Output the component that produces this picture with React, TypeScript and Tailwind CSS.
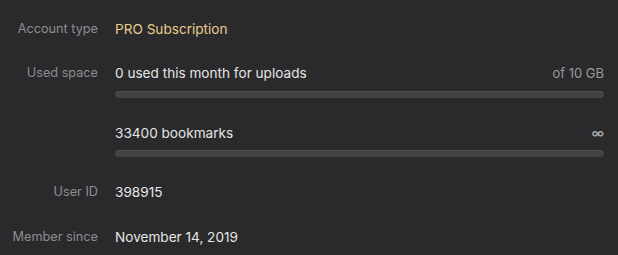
import React from 'react';

const Bar: React.FC = () => (
  <div className="h-[7px] w-full rounded-full bg-[#434345] border-t border-[#4f4f51]" />
);

const Row: React.FC<{ label: string; className?: string; children: React.ReactNode }> = ({ label, className, children }) => (
  <div className={`flex ${className || ''}`}>
    <div className="w-[98px] shrink-0 text-right text-[12.7px] text-[#8d8d90] leading-4">{label}</div>
    <div className="ml-[17px] flex-1 mr-[14px]">{children}</div>
  </div>
);

export default function App() {
  return (
    <div
      className="w-[618px] h-[255px] bg-[#2a2a2c] pt-[21px] text-[13.6px] text-[#e6e6e6] overflow-hidden"
      style={{ fontFamily: 'Inter, "Noto Sans", sans-serif' }}
    >
      <Row label="Account type">
        <div className="leading-4 text-[#e9cc8e]">PRO Subscription</div>
      </Row>

      <Row label="Used space" className="mt-[28px]">
        <div className="flex justify-between leading-4">
          <span>0 used this month for uploads</span>
          <span className="text-[#9a9a9c] text-[13px]">of 10 GB</span>
        </div>
        <div className="mt-[10px]">
          <Bar />
        </div>
        <div className="mt-[27px] flex justify-between leading-4">
          <span>33400 bookmarks</span>
          <span className="text-[#a5a5a7] text-[13px] font-semibold">∞</span>
        </div>
        <div className="mt-[9px]">
          <Bar />
        </div>
      </Row>

      <Row label="User ID" className="mt-[27px]">
        <div className="leading-4">398915</div>
      </Row>

      <Row label="Member since" className="mt-[29px]">
        <div className="leading-4">November 14, 2019</div>
      </Row>
    </div>
  );
}
